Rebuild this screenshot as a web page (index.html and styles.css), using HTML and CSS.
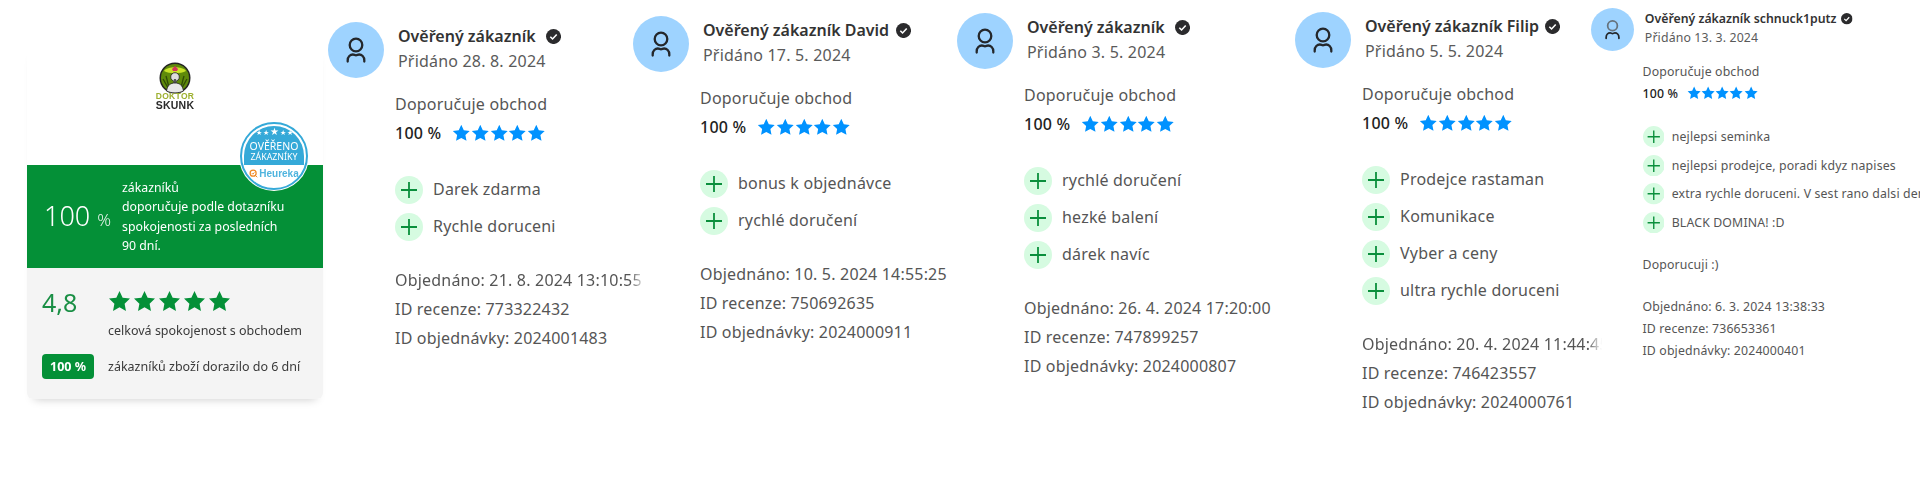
FILE: index.html
```html
<!DOCTYPE html>
<html lang="cs">
<head>
<meta charset="utf-8">
<title>Doktor Skunk – recenze</title>
<link rel="stylesheet" href="styles.css">
</head>
<body>
<svg class="defs" width="0" height="0" aria-hidden="true">
  <symbol id="star" viewBox="0 0 24 24"><path d="M12 1l3.290 6.970 7.650.980-5.610 5.280 1.430 7.570L12 18.100l-6.760 3.700 1.430-7.570-5.610-5.280 7.650-.980z"/></symbol>
  <symbol id="user" viewBox="0 0 56 56"><circle class="user-head" cx="28" cy="23" r="6.300" fill="none" stroke-width="2.300"/><path d="M19.700 39.500v-1.200c0-3.600 2.600-5.800 5.200-5.800 1.200 0 2 .8 3.100.8s1.900-.8 3.100-.8c2.600 0 5.200 2.200 5.200 5.800v1.200" fill="none" stroke="#24272b" stroke-width="2.300" stroke-linecap="round"/></symbol>
  <symbol id="check" viewBox="0 0 16 16"><circle cx="8" cy="8" r="8" fill="#2b2b2d"/><path d="M4.600 8.200l2.400 2.400 4.400-4.700" fill="none" stroke="#fff" stroke-width="1.700"/></symbol>
  <symbol id="plus" viewBox="0 0 28 28"><circle cx="14" cy="14" r="14" fill="#d6fbe1"/><path d="M6 14h16M14 6v16" stroke="#0a8f3c" stroke-width="1.800"/></symbol>
</svg>
<main class="page">
  <aside class="panel">
    <div class="brand">
      <svg class="brand-logo" viewBox="0 0 32 32" aria-hidden="true">
        <circle cx="16" cy="16" r="15.500" fill="#222"/>
        <circle cx="16" cy="16" r="14" fill="#5f8a0a"/>
        <path d="M5 9c3-5 19-5 22 0-5 3-17 3-22 0z" fill="#c9e32a"/>
        <path d="M13 7l3-3 3 3-1 2h-4z" fill="#d2355a"/>
        <path d="M7 14c2 6 2 11 5 15M25 14c-2 6-2 11-5 15M4 17c2 3 3 6 6 10M28 17c-2 3-3 6-6 10" stroke="#2f4a06" stroke-width="1.300" fill="none"/>
        <circle cx="16" cy="15" r="4.300" fill="#ddd" stroke="#222" stroke-width=".8"/>
        <path d="M15 17h2l1 5h-4z" fill="#555"/>
        <path d="M7.500 29c1-6 4-8 8.500-8s7.500 2 8.500 8c-5 2.500-12 2.500-17 0z" fill="#e8e8e8" stroke="#222" stroke-width=".8"/>
      </svg>
      <span class="brand-top">DOKTOR</span>
      <span class="brand-bottom">SKUNK</span>
    </div>
    <div class="seal">
      <div class="seal-top">
        <span class="seal-stars">★ ★ <b>★</b> ★ ★</span>
        <span class="seal-a">OVĚŘENO</span>
        <span class="seal-b">ZÁKAZNÍKY</span>
      </div>
      <div class="seal-bottom">
        <svg class="seal-q" viewBox="0 0 12 12" aria-hidden="true"><circle cx="5.500" cy="5.500" r="4" fill="none" stroke="#f08a24" stroke-width="1.700"/><path d="M8 8l3 3M3.800 5.500l1.400 1.400 2-2.400" fill="none" stroke="#f08a24" stroke-width="1.300"/></svg>
        <span>Heureka</span>
      </div>
    </div>
    <section class="green">
      <div class="big"><span>100</span> <small>%</small></div>
      <p>zákazníků<br>doporučuje podle dotazníku<br>spokojenosti za posledních<br>90 dní.</p>
    </section>
    <section class="grey">
      <div class="score">
        <div class="score-num">4,8</div>
        <div>
          <div class="gstars"><svg><use href="#star"/></svg><svg><use href="#star"/></svg><svg><use href="#star"/></svg><svg><use href="#star"/></svg><svg><use href="#star"/></svg></div>
          <div class="score-txt">celková spokojenost s obchodem</div>
        </div>
      </div>
      <div class="score score-low">
        <span class="pill">100 %</span>
        <span class="score-txt">zákazníků zboží dorazilo do 6 dní</span>
      </div>
    </section>
  </aside>

  <article class="review r1">
    <header class="head"><svg class="avatar"><use href="#user"/></svg><div class="who"><div class="name">Ověřený zákazník <svg class="check"><use href="#check"/></svg></div><div class="date">Přidáno 28. 8. 2024</div></div></header>
    <div class="rec"><div>Doporučuje obchod</div><div class="pct"><b>100 %</b><span class="stars"><svg><use href="#star"/></svg><svg><use href="#star"/></svg><svg><use href="#star"/></svg><svg><use href="#star"/></svg><svg><use href="#star"/></svg></span></div></div>
    <ul class="pros">
      <li><svg class="plus"><use href="#plus"/></svg>Darek zdarma</li>
      <li><svg class="plus"><use href="#plus"/></svg>Rychle doruceni</li>
    </ul>
    <div class="meta"><div class="clip">Objednáno: 21. 8. 2024 13:10:55</div><div>ID recenze: 773322432</div><div>ID objednávky: 2024001483</div></div>
  </article>

  <article class="review r2">
    <header class="head"><svg class="avatar"><use href="#user"/></svg><div class="who"><div class="name">Ověřený zákazník David <svg class="check"><use href="#check"/></svg></div><div class="date">Přidáno 17. 5. 2024</div></div></header>
    <div class="rec"><div>Doporučuje obchod</div><div class="pct"><b>100 %</b><span class="stars"><svg><use href="#star"/></svg><svg><use href="#star"/></svg><svg><use href="#star"/></svg><svg><use href="#star"/></svg><svg><use href="#star"/></svg></span></div></div>
    <ul class="pros">
      <li><svg class="plus"><use href="#plus"/></svg>bonus k objednávce</li>
      <li><svg class="plus"><use href="#plus"/></svg>rychlé doručení</li>
    </ul>
    <div class="meta"><div>Objednáno: 10. 5. 2024 14:55:25</div><div>ID recenze: 750692635</div><div>ID objednávky: 2024000911</div></div>
  </article>

  <article class="review r3">
    <header class="head"><svg class="avatar"><use href="#user"/></svg><div class="who"><div class="name">Ověřený zákazník <svg class="check"><use href="#check"/></svg></div><div class="date">Přidáno 3. 5. 2024</div></div></header>
    <div class="rec"><div>Doporučuje obchod</div><div class="pct"><b>100 %</b><span class="stars"><svg><use href="#star"/></svg><svg><use href="#star"/></svg><svg><use href="#star"/></svg><svg><use href="#star"/></svg><svg><use href="#star"/></svg></span></div></div>
    <ul class="pros">
      <li><svg class="plus"><use href="#plus"/></svg>rychlé doručení</li>
      <li><svg class="plus"><use href="#plus"/></svg>hezké balení</li>
      <li><svg class="plus"><use href="#plus"/></svg>dárek navíc</li>
    </ul>
    <div class="meta"><div>Objednáno: 26. 4. 2024 17:20:00</div><div>ID recenze: 747899257</div><div>ID objednávky: 2024000807</div></div>
  </article>

  <article class="review r4">
    <header class="head"><svg class="avatar"><use href="#user"/></svg><div class="who"><div class="name">Ověřený zákazník Filip <svg class="check"><use href="#check"/></svg></div><div class="date">Přidáno 5. 5. 2024</div></div></header>
    <div class="rec"><div>Doporučuje obchod</div><div class="pct"><b>100 %</b><span class="stars"><svg><use href="#star"/></svg><svg><use href="#star"/></svg><svg><use href="#star"/></svg><svg><use href="#star"/></svg><svg><use href="#star"/></svg></span></div></div>
    <ul class="pros">
      <li><svg class="plus"><use href="#plus"/></svg>Prodejce rastaman</li>
      <li><svg class="plus"><use href="#plus"/></svg>Komunikace</li>
      <li><svg class="plus"><use href="#plus"/></svg>Vyber a ceny</li>
      <li><svg class="plus"><use href="#plus"/></svg>ultra rychle doruceni</li>
    </ul>
    <div class="meta"><div class="clip">Objednáno: 20. 4. 2024 11:44:45</div><div>ID recenze: 746423557</div><div>ID objednávky: 2024000761</div></div>
  </article>

  <article class="review r5">
    <header class="head"><svg class="avatar"><use href="#user"/></svg><div class="who"><div class="name">Ověřený zákazník schnuck1putz <svg class="check"><use href="#check"/></svg></div><div class="date">Přidáno 13. 3. 2024</div></div></header>
    <div class="rec"><div>Doporučuje obchod</div><div class="pct"><b>100 %</b><span class="stars"><svg><use href="#star"/></svg><svg><use href="#star"/></svg><svg><use href="#star"/></svg><svg><use href="#star"/></svg><svg><use href="#star"/></svg></span></div></div>
    <ul class="pros">
      <li><svg class="plus"><use href="#plus"/></svg>nejlepsi seminka</li>
      <li><svg class="plus"><use href="#plus"/></svg>nejlepsi prodejce, poradi kdyz napises</li>
      <li><svg class="plus"><use href="#plus"/></svg>extra rychle doruceni. V sest rano dalsi den</li>
      <li><svg class="plus"><use href="#plus"/></svg>BLACK DOMINA! :D</li>
    </ul>
    <p class="note">Doporucuji :)</p>
    <div class="meta"><div>Objednáno: 6. 3. 2024 13:38:33</div><div>ID recenze: 736653361</div><div>ID objednávky: 2024000401</div></div>
  </article>
</main>
</body>
</html>
```
FILE: styles.css
```css
* { box-sizing: border-box; }
html, body { margin: 0; padding: 0; background: #fff; height: 500px; overflow: hidden; }
body { font-family: "Noto Sans", "Liberation Sans", sans-serif; color: #555; }
.defs { display: block; position: absolute; }
.page { display: flex; align-items: flex-start; padding-left: 27px; height: 500px; overflow: hidden; }

/* left badge panel */
.panel { position: relative; flex: none; width: 296px; margin-top: 45px; margin-right: 5px; background: #fff; border-radius: 0 0 6px 6px; box-shadow: 0 7px 9px -7px rgba(0,0,0,.22); filter: blur(.35px); }
.brand { height: 120px; display: flex; flex-direction: column; align-items: center; padding-top: 17px; font-family: "Liberation Sans", sans-serif; font-weight: 700; line-height: 9px; }
.brand-logo { width: 32px; height: 32px; margin-bottom: -2px; flex: none; }
.brand-top { font-size: 8.500px; color: #9db02e; letter-spacing: .3px; }
.brand-bottom { font-size: 10.500px; color: #2a2a2a; letter-spacing: .2px; }
.seal { position: absolute; left: 213px; top: 77px; width: 68px; height: 68px; border-radius: 50%; border: 2px solid #35a9d8; background: #fff; overflow: hidden; color: #fff; text-align: center; box-shadow: 0 0 0 1px #fff; padding: 2px; }
.seal-top { background: #35a9d8; height: 39px; display: flex; flex-direction: column; align-items: center; border-radius: 30px 30px 0 0; }
.seal-stars { font-size: 7px; line-height: 10px; margin-bottom: 2px; letter-spacing: -.4px; white-space: nowrap; }
.seal-stars b { font-size: 10px; font-weight: 400; }
.seal-a { font-size: 10.500px; line-height: 12px; white-space: nowrap; }
.seal-b { font-size: 8.800px; line-height: 10px; white-space: nowrap; }
.seal-bottom { display: flex; justify-content: center; align-items: center; gap: 1px; color: #4fb4de; font-size: 10px; line-height: 17px; font-weight: 700; font-family: "Liberation Sans", sans-serif; }
.seal-q { width: 9px; height: 9px; }
.green { height: 103px; background: #049037; color: #fff; display: flex; align-items: center; }
.big { width: 95px; padding-left: 17px; font-size: 27px; font-weight: 300; line-height: 36px; white-space: nowrap; margin-top: 2px; }
.big small { font-size: 17px; font-weight: 300; color: #e6f4ea; }
.green p { margin: 0; font-size: 12.300px; line-height: 19.300px; }
.grey { height: 131px; background: #f4f4f4; padding: 16px 15px 0; border-radius: 0 0 6px 6px; }
.score { display: flex; align-items: flex-start; }
.score-num { width: 66px; font-size: 25px; line-height: 36px; color: #1a8f45; }
.gstars { display: flex; gap: 2px; height: 23px; fill: #049037; margin-top: 6px; }
.gstars svg { width: 23px; height: 23px; }
.score-txt { font-size: 12.500px; line-height: 20px; color: #3a3a3a; margin-top: 8px; white-space: nowrap; }
.score-low { align-items: center; margin-top: 13px; gap: 14px; }
.score-low .score-txt { margin-top: 0; }
.pill { width: 52px; height: 25px; background: #049037; border-radius: 4px; color: #fff; font-size: 12.500px; font-weight: 700; line-height: 25px; text-align: center; white-space: nowrap; }

/* reviews */
.review { font-size: 16px; flex: none; letter-spacing: .012em; }
.r1 { width: 305px; padding-top: 22px; }
.r2 { width: 324px; padding-top: 16px; }
.r3 { width: 338px; padding-top: 13px; }
.r4 { width: 296px; padding-top: 12px; }
.r5 { width: 329px; padding-top: 8px; font-size: 12.300px; }
.head { display: flex; gap: .875em; height: 3.500em; }
.avatar { width: 3.500em; height: 3.500em; border-radius: 50%; background: #9ed3ff; flex: none; }
.user-head { stroke: var(--head, #24272b); }
.r5 .avatar { --head: #66727c; }
.who { padding-top: .1em; }
.name { display: flex; align-items: center; gap: .4em; font-weight: 600; color: #333; line-height: 1.560em; white-space: nowrap; letter-spacing: 0; }
.r1 .name, .r3 .name { gap: .63em; }
.date { line-height: 1.560em; color: #5a5a5a; white-space: nowrap; }
.check { width: .940em; height: .940em; flex: none; }
.rec { margin: .9em 0 0 4.190em; line-height: 1.560em; }
.pct { display: flex; align-items: center; gap: .7em; margin-top: .22em; color: #222; }
.pct b { font-weight: 500; }
.stars { display: flex; fill: #0092ff; }
.stars svg { width: 1.160em; height: 1.160em; }
.pros { list-style: none; margin: 1.875em 0 0 4.190em; padding: 0; display: flex; flex-direction: column; gap: .5625em; }
.pros li { display: flex; align-items: center; gap: .625em; height: 1.750em; line-height: 1.550em; white-space: nowrap; }
.plus { width: 1.750em; height: 1.750em; flex: none; }
.note { margin: 1.800em 0 0 4.190em; line-height: 1.560em; }
.meta { margin: 1.600em 0 0 4.190em; line-height: 1.810em; white-space: nowrap; }
.clip { width: 250px; overflow: hidden; -webkit-mask-image: linear-gradient(to right, #000 calc(100% - 14px), transparent); mask-image: linear-gradient(to right, #000 calc(100% - 14px), transparent); }
.r4 .clip { width: 240px; }
.r5 .meta { margin-top: 1.800em; line-height: 1.770em; }
```
